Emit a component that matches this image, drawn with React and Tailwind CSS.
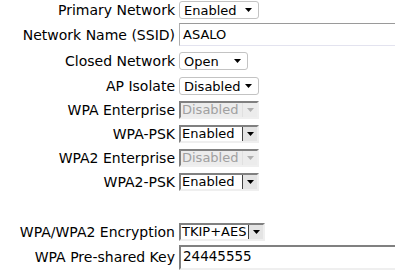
import React from 'react';

const Arrow = ({ color = '#000' }) => (
  <svg width="7" height="4" viewBox="0 0 7 4" className="shrink-0">
    <path d="M0 0h7L3.5 4z" fill={color} />
  </svg>
);

const Select = ({ value, w }) => (
  <div className={`${w} h-[18px] flex items-center justify-between border border-[#c3c3c3] rounded-[3px] bg-white pl-[4px] pr-[6px] text-[13px]`}>
    <span>{value}</span>
    <Arrow />
  </div>
);

const OldSelect = ({ value, w, disabled }) => (
  <div className={`${w} h-[18px] flex border-2 border-t-[#808080] border-l-[#808080] border-r-[#efefef] border-b-[#efefef] text-[13px] ${disabled ? 'bg-[#ececec] text-[#a0a0a0]' : 'bg-white'}`}>
    <span className="flex-1 leading-[14px] pl-[1px] whitespace-nowrap">{value}</span>
    <div className={`w-[15px] shrink-0 flex items-center justify-center border-l ${disabled ? 'border-[#e0e0e0]' : 'border-[#404040] bg-[#e4e4e4]'}`}>
      <Arrow color={disabled ? '#b0b0b0' : '#000'} />
    </div>
  </div>
);

const Row = ({ label, h, children }) => (
  <div className={`flex items-center ${h}`}>
    <div className="w-[175px] text-right shrink-0 whitespace-nowrap">{label}</div>
    <div className="ml-[4px] flex-1 min-w-0">{children}</div>
  </div>
);

export default function App() {
  return (
    <div className="w-[395px] h-[274px] overflow-hidden bg-white text-black text-[14px] leading-none" style={{ fontFamily: '"DejaVu Sans", Verdana, sans-serif' }}>
      <Row label="Primary Network" h="h-[20px]"><Select value="Enabled" w="w-[80px]" /></Row>
      <Row label="Network Name (SSID)" h="h-[29px]">
        <div className="h-[23px] w-[230px] flex items-center border border-t-[#9a9a9a] border-l-[#b0b0b0] border-b-[#e3e3ef] border-r-transparent pl-[3px] text-[13px]">ASALO</div>
      </Row>
      <Row label="Closed Network" h="h-[24px]"><Select value="Open" w="w-[69px]" /></Row>
      <Row label="AP Isolate" h="h-[26px]"><Select value="Disabled" w="w-[80px]" /></Row>
      <Row label="WPA Enterprise" h="h-[22px]"><OldSelect value="Disabled" w="w-[80px]" disabled /></Row>
      <Row label="WPA-PSK" h="h-[25px]"><OldSelect value="Enabled" w="w-[80px]" /></Row>
      <Row label="WPA2 Enterprise" h="h-[24px]"><OldSelect value="Disabled" w="w-[80px]" disabled /></Row>
      <Row label="WPA2-PSK" h="h-[24px]"><OldSelect value="Enabled" w="w-[80px]" /></Row>
      <div className="h-[26px]" />
      <Row label="WPA/WPA2 Encryption" h="h-[24px]"><OldSelect value="TKIP+AES" w="w-[86px]" /></Row>
      <Row label="WPA Pre-shared Key" h="h-[26px]">
        <div className="h-[25px] w-[230px] flex items-center border-2 border-t-[#808080] border-l-[#808080] border-b-[#efefef] border-r-transparent pl-[2px] text-[13.5px]">24445555</div>
      </Row>
    </div>
  );
}
